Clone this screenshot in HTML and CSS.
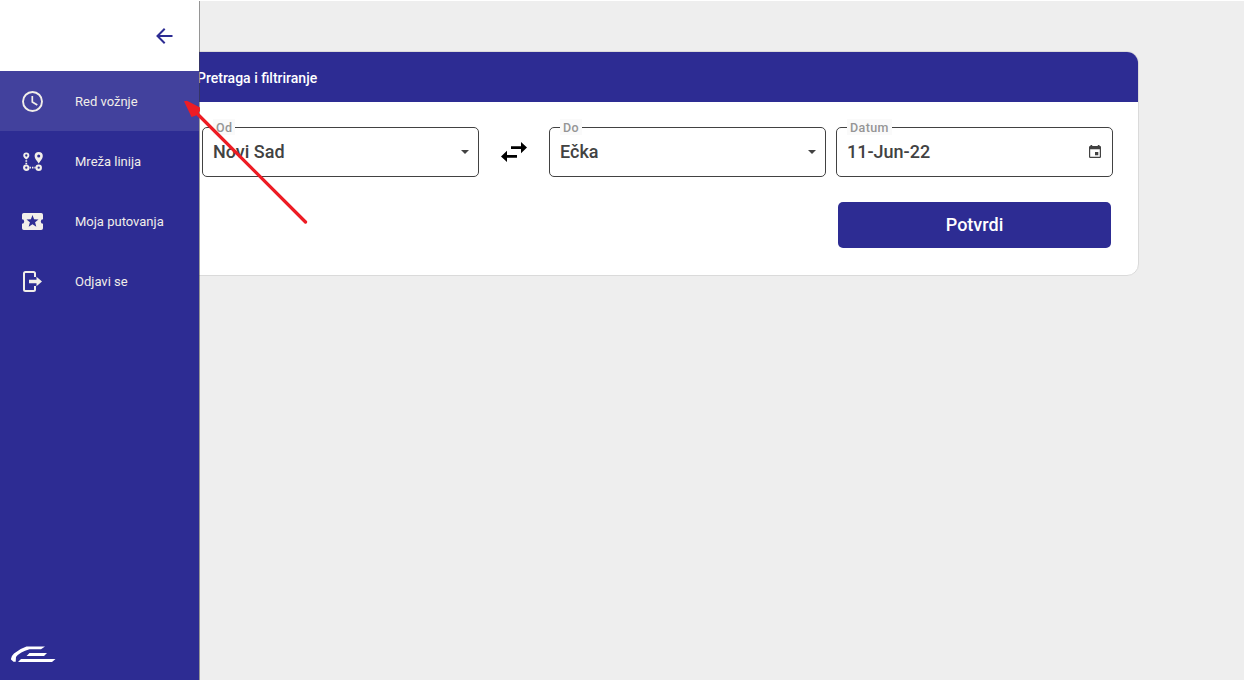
FILE: index.html
```
<!DOCTYPE html>
<html lang="sr-Latn">
<head>
<meta charset="utf-8">
<title>Red vožnje</title>
<link rel="stylesheet" href="styles.css">
</head>
<body>
<main class="page">
  <section class="card">
    <h1 class="card-header">Pretraga i filtriranje</h1>
    <form class="search">
      <div class="fields">
        <div class="field"><span class="label">Od</span><span class="value">Novi Sad</span>
          <svg class="caret" width="8" height="4" viewBox="0 0 8 4"><path d="M0 0h8L4 4z"/></svg></div>
        <svg class="swap" width="26" height="20" viewBox="0 0 26 20"><path d="M10 4.200h10V0l6 5.600-6 5.600V7.100H10zM16 12.900H6V8.800L0 14.400 6 20v-4.200h10z"/></svg>
        <div class="field"><span class="label">Do</span><span class="value">Ečka</span>
          <svg class="caret" width="8" height="4" viewBox="0 0 8 4"><path d="M0 0h8L4 4z"/></svg></div>
        <div class="field field-date"><span class="label">Datum</span><span class="value">11-Jun-22</span>
          <svg class="calendar" width="12" height="13" viewBox="0 0 12 13"><path fill-rule="evenodd" d="M1.500 0h1.700v1h5.600V0h1.700v1h.5Q12 1 12 2.200v9.600Q12 13 10.800 13H1.200Q0 13 0 11.800V2.200Q0 1 1.200 1h.3zM1.200 4.200v7.600h9.600V4.200zM6 7h3.300v3.300H6z"/></svg></div>
      </div>
      <button class="submit" type="button">Potvrdi</button>
    </form>
  </section>
</main>

<aside class="drawer">
  <div class="drawer-top">
    <svg width="17" height="16" viewBox="0 0 17 16" fill="none" stroke="#2d2c93" stroke-width="2"><path d="M16.500 8H1.500M8.700.8 1.500 8l7.200 7.200"/></svg>
  </div>
  <nav class="menu">
    <a class="item active"><svg class="icon" viewBox="0 0 21 21"><circle cx="10.500" cy="10.500" r="9.500" fill="none" stroke="currentColor" stroke-width="1.900"/><path d="M10.300 5v6l5 3" fill="none" stroke="currentColor" stroke-width="1.700"/></svg>Red vožnje</a>
    <a class="item"><svg class="icon" viewBox="0 0 22 22"><path fill="currentColor" fill-rule="evenodd" d="M4.500 1.500a3.200 3.200 0 0 1 3.200 3.200C7.700 6.500 6 8 4.500 9 3 8 1.300 6.500 1.300 4.700a3.200 3.200 0 0 1 3.200-3.200zm0 2a1.200 1.200 0 1 0 0 2.400 1.200 1.200 0 0 0 0-2.400zM17.500 1a4.300 4.300 0 0 1 4.300 4.200c0 2.600-2.500 5.300-4.300 7.800-1.800-2.500-4.300-5.200-4.300-7.800A4.300 4.300 0 0 1 17.500 1zm0 2.700a1.600 1.600 0 1 0 0 3.200 1.600 1.600 0 0 0 0-3.200z"/><g fill="none" stroke="currentColor" stroke-width="2.200"><circle cx="4.500" cy="17.500" r="2.300"/><circle cx="17.500" cy="17.500" r="2.300"/></g><path d="M4.500 9.700v1.600m0 1.100v1.600M8 17.500h1.400m1 0h1.600m1 0h1.400" fill="none" stroke="currentColor" stroke-width="1.800"/></svg>Mreža linija</a>
    <a class="item"><svg class="icon" viewBox="0 0 21 21"><path fill="currentColor" fill-rule="evenodd" d="M1.800 2h17.400A1.800 1.800 0 0 1 21 3.800V8.300a2.200 2.200 0 0 0 0 4.400v4.500a1.800 1.800 0 0 1-1.800 1.800H1.800A1.800 1.800 0 0 1 0 17.200v-4.500a2.200 2.200 0 0 0 0-4.400V3.800A1.800 1.800 0 0 1 1.800 2zM10.500 4 8.900 8.300 4.500 8.500l3.400 2.800-1.200 4.400 3.800-2.500 3.800 2.500-1.200-4.400 3.400-2.800-4.400-.2z"/></svg>Moja putovanja</a>
    <a class="item"><svg class="icon" viewBox="0 0 21 21"><path d="M13 6V2.500Q13 1 11.500 1H3.500Q2 1 2 2.500v16Q2 20 3.500 20h8q1.500 0 1.500-1.500V15" fill="none" stroke="currentColor" stroke-width="2"/><path d="M7 8.700H14.500V5.700l5.500 4.800-5.500 4.800v-3H7z" fill="currentColor"/></svg>Odjavi se</a>
  </nav>
  <svg class="logo" width="46" height="17" viewBox="0 0 46 17"><path fill="#fff" d="M15.500.5H34l-4 2.800H18.500Q9 6 5 11l-.3 4.700H2.500L0 13.400Q-.2 10.500 3 7.500 9 2.500 15.500.5zM18.500 7H36L33 10H15.500zM10 13h34.500L41 16H7z"/></svg>
</aside>

<svg class="pointer" width="126" height="126" viewBox="0 0 126 126"><path d="M10 10.500 121.500 122" stroke="#ed1c24" stroke-width="3.300" stroke-linecap="round"/><path d="M0 1.200 3 .8 16 7.500 16 11 12 15.500 7.500 17z" fill="#ed1c24"/></svg>
</body>
</html>
```
FILE: styles.css
```
* { box-sizing: border-box; }
body {
  margin: 0;
  height: 680px;
  position: relative;
  overflow: hidden;
  background: #eee;
  font-family: Roboto, sans-serif;
}
.page {
  height: 680px;
  padding: 50px 105px 0;
  border-top: 1px solid #fff;
}
.card {
  height: 225px;
  overflow: hidden;
  border: 1px solid #dadada;
  border-radius: 12px;
  background: #fff;
}
.card-header {
  margin: 0;
  height: 50px;
  padding-left: 91px;
  background: #2d2c93;
  color: #fff;
  font-size: 14px;
  font-weight: 500;
  line-height: 53px;
}
.search {
  display: flex;
  flex-direction: column;
  align-items: flex-end;
  padding: 25px 25px 0;
}
.fields { display: flex; align-items: center; }
.field {
  position: relative;
  display: flex;
  align-items: center;
  justify-content: space-between;
  width: 277px;
  height: 50px;
  padding: 0 10px;
  border: 1px solid #424242;
  border-radius: 5px;
  color: #424242;
}
.field-date { margin-left: 10px; }
.label {
  position: absolute;
  left: 10px;
  top: -9px;
  height: 16px;
  padding: 0 3px;
  background: #fafafa;
  color: #959595;
  font-size: 12.5px;
  font-weight: 500;
  letter-spacing: .4px;
  line-height: 17px;
}
.value {
  padding-bottom: 2px;
  font-size: 18px;
  font-weight: 500;
}
.caret, .calendar { fill: #424242; }
.caret { margin-right: -1px; }
.calendar { margin: 0 1px 1px 0; }
.swap { margin: 0 22px; }
.submit {
  width: 273px;
  height: 46px;
  margin: 25px 2px 0 0;
  padding: 0 0 2px;
  border: 0;
  border-radius: 5px;
  background: #2d2c93;
  color: #fff;
  font: 500 18px Roboto, sans-serif;
}
.drawer {
  position: absolute;
  left: 0;
  top: 0;
  width: 199px;
  height: 680px;
  display: flex;
  flex-direction: column;
  box-shadow: 1px 1px 0 rgba(60, 60, 60, .5);
  background: #2d2c93;
}
.drawer-top {
  display: flex;
  justify-content: flex-end;
  align-items: center;
  height: 71px;
  padding-right: 26px;
  background: #fff;
}
.menu { flex: 1; }
.item {
  display: flex;
  align-items: center;
  gap: 32px;
  height: 60px;
  padding-left: 22px;
  color: #f1eee9;
  font-size: 13px;
}
.active { background: #42419d; }
.icon { width: 21px; height: 21px; margin-top: 1px; }
.logo { margin: 0 0 17px 11px; }
.pointer { position: absolute; left: 184px; top: 100px; }
```
